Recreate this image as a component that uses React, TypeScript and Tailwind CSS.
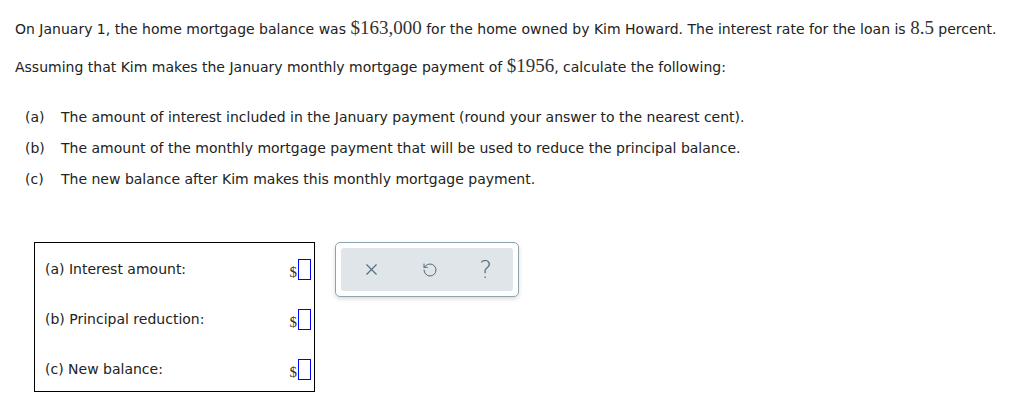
import { X, RotateCcw } from "lucide-react";

const num = "font-['Liberation_Serif',serif] text-[19px] text-[#333] leading-none";

function Field({ label }: { label: string }) {
  return (
    <div className="flex items-center justify-between h-[50px]">
      <span>{label}</span>
      <span className="flex items-end">
        <span className={"font-['Liberation_Serif',serif] text-[15px] text-[#333] leading-none mr-px"}>$</span>
        <span className="block w-[13px] h-[21px] border border-[#0000ff] bg-white" />
      </span>
    </div>
  );
}

export default function App() {
  return (
    <div className="bg-white w-[1012px] h-[408px] font-['DejaVu_Sans',Verdana,sans-serif] text-[14px] text-[#222] px-[15px] pt-[17px]">
      <p className="h-[24px] leading-[24px]">
        On January 1, the home mortgage balance was <span className={num}>$163,000</span> for the home owned by Kim Howard. The interest rate for the loan is <span className={num}>8.5</span> percent.
      </p>
      <p className="h-[24px] leading-[24px] mt-[14px]">
        Assuming that Kim makes the January monthly mortgage payment of <span className={num}>$1956</span>, calculate the following:
      </p>
      <div className="mt-[29px] ml-[10px] flex flex-col gap-[13px]">
        {[
          ["(a)", "The amount of interest included in the January payment (round your answer to the nearest cent)."],
          ["(b)", "The amount of the monthly mortgage payment that will be used to reduce the principal balance."],
          ["(c)", "The new balance after Kim makes this monthly mortgage payment."],
        ].map(([k, t]) => (
          <div key={k} className="flex h-[18px] leading-[18px]">
            <span className="w-[36px]">{k}</span>
            <span>{t}</span>
          </div>
        ))}
      </div>
      <div className="mt-[54px] ml-[19px] flex items-start gap-[20px]">
        <div className="w-[281px] h-[150px] border border-black pl-[10px] pr-[3px] pt-[1px]">
          <Field label="(a) Interest amount:" />
          <Field label="(b) Principal reduction:" />
          <Field label="(c) New balance:" />
        </div>
        <div className="w-[184px] h-[55px] rounded-[5px] border border-[#8fa3ad] p-[5px] shadow-[0_2px_4px_rgba(0,0,0,0.15)]">
          <div className="h-full rounded-[3px] bg-[#dfe5e8] flex items-center justify-between pl-[21px] pr-[21px] text-[#4e6e7c]">
            <X size={19} strokeWidth={1.4} />
            <RotateCcw size={16} strokeWidth={1.5} />
            <span className="font-['DejaVu_Sans',sans-serif] text-[24px] leading-none font-extralight">?</span>
          </div>
        </div>
      </div>
    </div>
  );
}
